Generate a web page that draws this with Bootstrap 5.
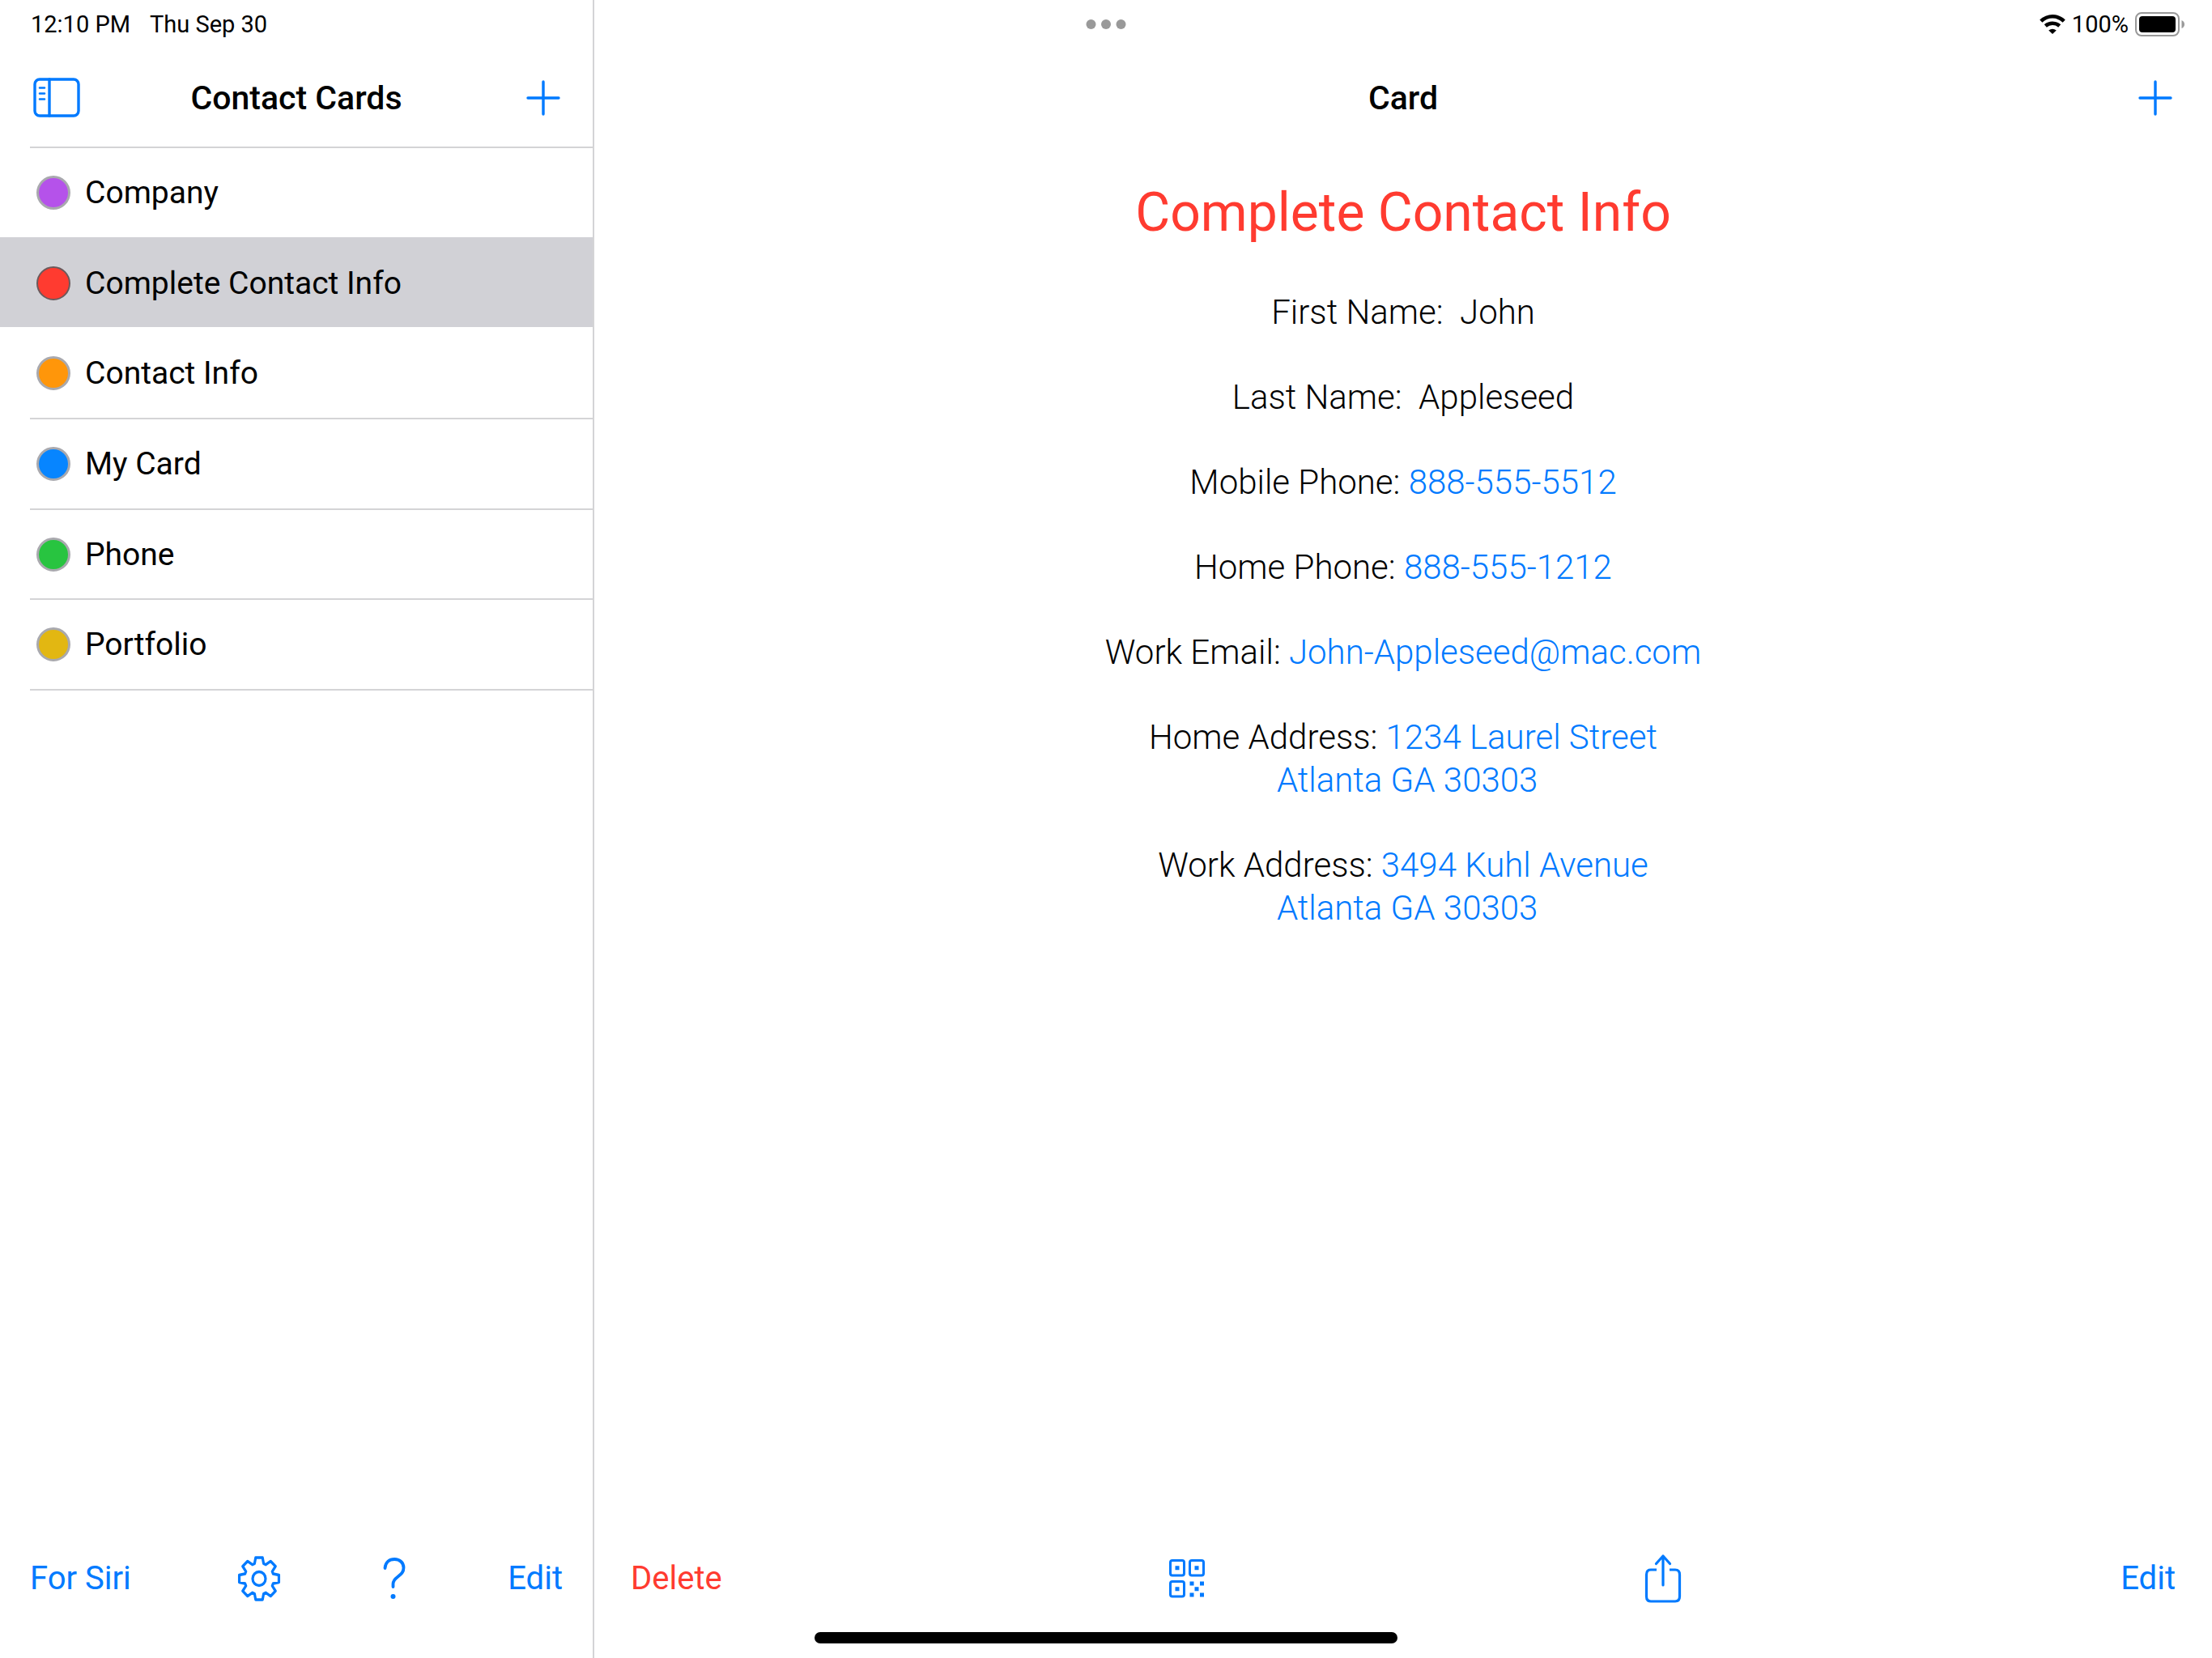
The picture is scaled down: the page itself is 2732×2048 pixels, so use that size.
<!DOCTYPE html>
<html lang="en">
<head>
<meta charset="utf-8">
<meta name="viewport" content="width=device-width, initial-scale=1">
<title>Contact Cards</title>
<link href="https://cdn.jsdelivr.net/npm/bootstrap@5.3.0/dist/css/bootstrap.min.css" rel="stylesheet">
<style>
  :root { --tint: #007aff; --danger: #ff3b30; --hairline: #d4d4d6; }
  body { font-family: Roboto, "Liberation Sans", sans-serif; font-size: 39px; line-height: 48px; color: #000; background: #fff; }
  svg { display: block; fill: none; stroke: currentColor; stroke-linecap: round; stroke-linejoin: round; }

  .status-bar { top: 0; left: 0; right: 0; height: 60px; padding: 0 34px; font-size: 29px; line-height: 32px; }
  .thirds { display: grid; grid-template-columns: 1fr auto 1fr; align-items: center; }
  .home-bar { bottom: 18px; left: 50%; width: 720px; height: 14px; margin-left: -360px; background: #000; border-radius: 7px; }

  .side-panel { width: 734px; border-right: 2px solid var(--hairline); }
  .top-bar { height: 181px; padding: 61px 40px 0; }
  .main-panel .top-bar { padding-left: 48px; padding-right: 48px; }
  .bar-title { font-size: 41px; line-height: 48px; font-weight: 500; margin: 0; }

  .btn.btn-tint { --bs-btn-color: var(--tint); --bs-btn-hover-color: var(--tint); --bs-btn-active-color: var(--tint);
    font-size: 40px; line-height: 48px; padding: 0; border: 0; border-radius: 8px; }
  .btn.btn-tint.is-danger { --bs-btn-color: var(--danger); --bs-btn-hover-color: var(--danger); }

  .card-list { height: 672px; }
  .card-list a { color: #000; padding-left: 37px; }
  .row-line { border-top: 2px solid var(--hairline); padding-left: 8px; gap: 18px; }
  .card-list a:last-child .row-line { border-bottom: 2px solid var(--hairline); }
  .card-list a.chosen { background: #d1d1d6; }
  .card-list a.chosen .row-line, .card-list a.chosen + a .row-line { border-top-color: transparent; }
  .dot { width: 42px; height: 42px; border-radius: 50%; border: 3px solid #a9a9ae; flex: none; }
  .chosen .dot { border: 2px solid #6b5a5c; }

  .card-name { font-size: 66px; line-height: 88px; font-weight: 400; color: var(--danger); margin: 38px 0 52px; }
  .fields p { font-size: 42px; line-height: 53px; font-weight: 300; margin: 0 0 52px; }
  .fields a { color: var(--tint); text-decoration: none; }

  .bottom-bar { height: 196px; }
  .side-panel .bottom-bar { padding-left: 37px; padding-right: 37px; }
  .main-panel .bottom-bar { padding-left: 45px; padding-right: 45px; }
</style>
</head>
<body>
<div class="d-flex vh-100 position-relative overflow-hidden">

  <aside class="side-panel d-flex flex-column flex-shrink-0">
    <header class="top-bar thirds">
      <button class="btn btn-tint me-auto" type="button" aria-label="Toggle sidebar">
        <svg width="60" height="50" viewBox="0 0 60 50" stroke-width="3.4">
          <rect x="3" y="2" width="54" height="45" rx="6"/>
          <path d="M21 2v45"/>
          <path d="M9 12.500h6M9 19.500h6M9 26.500h6" stroke-width="2.600"/>
        </svg>
      </button>
      <h1 class="bar-title">Contact Cards</h1>
      <button class="btn btn-tint ms-auto" type="button" aria-label="Add card">
        <svg width="44" height="44" viewBox="0 0 44 44" stroke-width="3.4"><path d="M23 2v40M4 22h38"/></svg>
      </button>
    </header>

    <nav class="card-list d-flex flex-column" aria-label="Cards">
      <a href="#" class="d-flex flex-fill text-decoration-none"><span class="row-line d-flex align-items-center flex-fill"><span class="dot" style="background:#b552ea"></span>Company</span></a>
      <a href="#" class="d-flex flex-fill text-decoration-none chosen" aria-current="true"><span class="row-line d-flex align-items-center flex-fill"><span class="dot" style="background:#ff3b30"></span>Complete Contact Info</span></a>
      <a href="#" class="d-flex flex-fill text-decoration-none"><span class="row-line d-flex align-items-center flex-fill"><span class="dot" style="background:#ff960a"></span>Contact Info</span></a>
      <a href="#" class="d-flex flex-fill text-decoration-none"><span class="row-line d-flex align-items-center flex-fill"><span class="dot" style="background:#0785ff"></span>My Card</span></a>
      <a href="#" class="d-flex flex-fill text-decoration-none"><span class="row-line d-flex align-items-center flex-fill"><span class="dot" style="background:#28c440"></span>Phone</span></a>
      <a href="#" class="d-flex flex-fill text-decoration-none"><span class="row-line d-flex align-items-center flex-fill"><span class="dot" style="background:#e2b712"></span>Portfolio</span></a>
    </nav>

    <footer class="bottom-bar d-flex align-items-center justify-content-between mt-auto">
      <button class="btn btn-tint" type="button">For Siri</button>
      <button class="btn btn-tint" type="button" aria-label="Settings">
        <svg width="60" height="60" viewBox="-32 -30 60 60" stroke-width="3.4">
          <g transform="scale(.94 1)">
            <path d="M-4.500-26H4.500L6-18.500 8.840-17.300 15.200-21.560 21.560-15.200 17.300-8.840 18.500-6 26-4.500V4.500L18.500 6 17.300 8.840 21.560 15.200 15.200 21.560 8.840 17.300 6 18.500 4.500 26H-4.500L-6 18.500-8.840 17.300-15.200 21.560-21.560 15.200-17.300 8.840-18.500 6-26 4.500V-4.500L-18.500-6-17.300-8.840-21.560-15.200-15.200-21.560-8.840-17.300-6-18.500Z"/>
            <circle r="8.500"/>
          </g>
        </svg>
      </button>
      <button class="btn btn-tint" type="button" aria-label="Help">
        <svg width="28" height="54" viewBox="0 0 28 54" stroke-width="3.800">
          <path d="M2.500 14C3 6.500 8 3 14.200 3 21 3 25.500 7.500 25.500 13.500 25.500 19 22.500 21.500 18.500 24.500 14.500 27.500 12.500 30 12.500 33.500V37"/>
          <circle cx="12.500" cy="49" r="3" fill="currentColor" stroke="none"/>
        </svg>
      </button>
      <button class="btn btn-tint" type="button">Edit</button>
    </footer>
  </aside>

  <main class="main-panel d-flex flex-column flex-fill">
    <header class="top-bar thirds">
      <span></span>
      <h2 class="bar-title">Card</h2>
      <button class="btn btn-tint ms-auto" type="button" aria-label="Add">
        <svg width="44" height="44" viewBox="0 0 44 44" stroke-width="3.4"><path d="M22 2v40M3 22h38"/></svg>
      </button>
    </header>

    <section class="fields text-center">
      <h3 class="card-name">Complete Contact Info</h3>
      <p>First Name:&nbsp; John</p>
      <p>Last Name:&nbsp; Appleseed</p>
      <p>Mobile Phone: <a href="tel:888-555-5512">888-555-5512</a></p>
      <p>Home Phone: <a href="tel:888-555-1212">888-555-1212</a></p>
      <p>Work Email: <a href="mailto:John-Appleseed@mac.com">John-Appleseed@mac.com</a></p>
      <p>Home Address: <a href="#">1234 Laurel Street<br>&nbsp;Atlanta GA 30303</a></p>
      <p>Work Address: <a href="#">3494 Kuhl Avenue<br>&nbsp;Atlanta GA 30303</a></p>
    </section>

    <footer class="bottom-bar d-flex align-items-center justify-content-between mt-auto">
      <button class="btn btn-tint is-danger" type="button">Delete</button>
      <button class="btn btn-tint" type="button" aria-label="Show QR code">
        <svg width="56" height="50" viewBox="-9 0 56 50" stroke-width="3">
          <rect x="2.500" y="2.500" width="17" height="18.500" rx="2.500"/>
          <rect x="26.500" y="2.500" width="17" height="18.500" rx="2.500"/>
          <rect x="2.500" y="28.500" width="17" height="18.500" rx="2.500"/>
          <path fill="currentColor" stroke="none" d="M8.500 9.200h5v5h-5zM32.500 9.200h5v5h-5zM8.500 35.200h5v5h-5zM26.500 28.500h5v5h-5zM39 28.500h5v5h-5zM32.500 35.200h5v5h-5zM26.500 42.500h5v5h-5zM39 42.500h5v5h-5z"/>
        </svg>
      </button>
      <button class="btn btn-tint" type="button" aria-label="Share">
        <svg width="46" height="62" viewBox="0 0 46 62" stroke-width="3.200">
          <path d="M15 20H8Q2.500 20 2.500 26V53Q2.500 59 8 59H38Q43.500 59 43.500 53V26Q43.500 20 38 20H31" stroke-linecap="butt"/>
          <path d="M23 39V3M14.500 12.500 23 3 31.500 12.500"/>
        </svg>
      </button>
      <button class="btn btn-tint" type="button">Edit</button>
    </footer>
  </main>

  <div class="status-bar thirds position-absolute">
    <div class="d-flex gap-4 ps-1"><span>12:10 PM</span><span>Thu Sep 30</span></div>
    <svg width="50" height="12" viewBox="0 0 50 12"><g fill="#999" stroke="none"><circle cx="6.500" cy="6" r="6"/><circle cx="25" cy="6" r="6"/><circle cx="43.500" cy="6" r="6"/></g></svg>
    <div class="d-flex align-items-center justify-content-end gap-2">
      <svg width="32" height="26" viewBox="0 0 32 26" stroke-width="4.600">
        <path d="M1.800 9.200Q8 3.300 16 3.300T30.200 9.200" stroke-linecap="butt"/>
        <path d="M7.300 15Q11 11.800 16 11.800T24.700 15" stroke-linecap="butt"/>
        <path d="M11.200 20.500Q16 16.800 20.800 20.500L16 25Z" fill="currentColor" stroke="none"/>
      </svg>
      <span>100%</span>
      <svg width="61" height="30" viewBox="0 0 61 30">
        <rect x="1" y="1" width="53" height="28" rx="7" stroke="#999" stroke-width="2"/>
        <rect x="5" y="5" width="45" height="20" rx="4" fill="currentColor" stroke="none"/>
        <path d="M57.500 10Q61 11.500 61 15T57.500 20Z" fill="#999" stroke="none"/>
      </svg>
    </div>
  </div>
  <div class="home-bar position-absolute"></div>
</div>
<script src="https://cdn.jsdelivr.net/npm/bootstrap@5.3.0/dist/js/bootstrap.bundle.min.js"></script>
</body>
</html>
